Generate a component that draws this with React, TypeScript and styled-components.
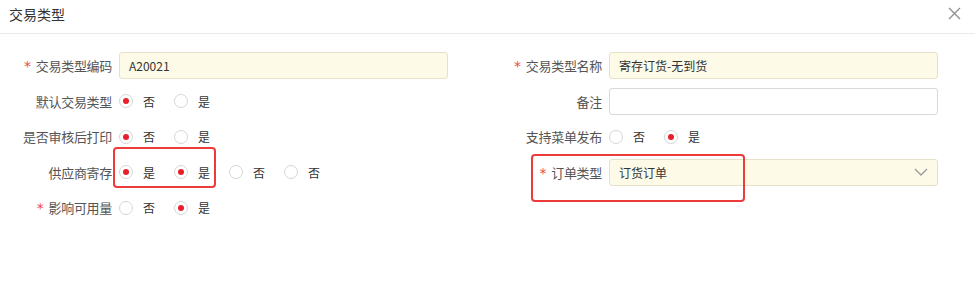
import React from "react";
import styled, { createGlobalStyle } from "styled-components";

const Global = createGlobalStyle`
  html, body { margin: 0; padding: 0; background: #fff; }
  body { font-family: "Noto Sans CJK SC", "Noto Sans", sans-serif; color: #555; }
  * { box-sizing: border-box; }
`;

const Dialog = styled.div`
  width: 975px;
  height: 306px;
  background: #fff;
`;

const Header = styled.div`
  height: 34px;
  display: flex;
  align-items: center;
  justify-content: space-between;
  padding: 0 14px 0 9px;
  border-bottom: 1px solid #e9e9e9;
`;

const Title = styled.div`
  font-size: 14px;
  color: #333;
  line-height: 1;
  margin-top: -6px;
`;

const Close = styled.button`
  border: none;
  background: none;
  padding: 0;
  width: 14px;
  height: 14px;
  display: flex;
  align-items: center;
  justify-content: center;
  margin-top: -6px;
  cursor: pointer;
`;

const Form = styled.div`
  display: grid;
  grid-template-columns: 448px 448px;
  grid-auto-rows: 35.5px;
  column-gap: 42px;
  padding-top: 13.75px;
`;

const Row = styled.div<{ $col: number; $row: number }>`
  grid-column: ${(p) => p.$col};
  grid-row: ${(p) => p.$row};
  display: flex;
  align-items: center;
  position: relative;
`;

const Label = styled.div`
  width: 113px;
  flex-shrink: 0;
  text-align: right;
  font-size: 13px;
  color: #555;
  padding-right: 1px;
  white-space: nowrap;
  letter-spacing: -0.3px;
`;

const Star = styled.span`
  color: #f04848;
  font-family: "DejaVu Sans", sans-serif;
  font-size: 14px;
  margin-right: 5px;
`;

const Input = styled.div<{ $filled?: boolean }>`
  margin-left: 6px;
  flex: 1;
  height: 27px;
  border: 1px solid ${(p) => (p.$filled ? "#e6e1c9" : "#d9d9d9")};
  background: ${(p) => (p.$filled ? "#fdfae8" : "#fff")};
  border-radius: 3px;
  display: flex;
  align-items: center;
  padding: 0 9px;
  font-size: 12px;
  color: #333;
  justify-content: space-between;
`;

const Radios = styled.div`
  margin-left: 6px;
  display: flex;
  align-items: center;
`;

const Option = styled.label`
  display: flex;
  align-items: center;
  width: 55px;
  font-size: 12px;
  color: #333;
`;

const Circle = styled.span<{ $on?: boolean }>`
  width: 14px;
  height: 14px;
  border-radius: 50%;
  border: 1px solid #d6d6d6;
  background: #fff;
  display: flex;
  align-items: center;
  justify-content: center;
  margin-right: 10px;
  &::after {
    content: "";
    width: 6px;
    height: 6px;
    border-radius: 50%;
    background: ${(p) => (p.$on ? "#e8202a" : "transparent")};
  }
`;

const Mark = styled.div<{ $l: number; $t: number; $w: number; $h: number }>`
  position: absolute;
  left: ${(p) => p.$l}px;
  top: ${(p) => p.$t}px;
  width: ${(p) => p.$w}px;
  height: ${(p) => p.$h}px;
  border: 2px solid #ec3b3b;
  border-radius: 4px;
  pointer-events: none;
`;

type Opt = { t: string; on?: boolean };

const RadioGroup = ({ opts }: { opts: Opt[] }) => (
  <Radios>
    {opts.map((o, i) => (
      <Option key={i}>
        <Circle $on={o.on} />
        {o.t}
      </Option>
    ))}
  </Radios>
);

const Chevron = () => (
  <svg width="14" height="8" viewBox="0 0 14 8" fill="none">
    <path d="M1 1l6 6 6-6" stroke="#999" strokeWidth="1.3" />
  </svg>
);

export default function App() {
  return (
    <Dialog>
      <Global />
      <Header>
        <Title>交易类型</Title>
        <Close aria-label="close">
          <svg width="13" height="13" viewBox="0 0 13 13">
            <path d="M1 1l11 11M12 1L1 12" stroke="#8f8f8f" strokeWidth="1.4" />
          </svg>
        </Close>
      </Header>
      <Form>
        <Row $col={1} $row={1}>
          <Label>
            <Star>*</Star>交易类型编码
          </Label>
          <Input $filled>A20021</Input>
        </Row>
        <Row $col={1} $row={2}>
          <Label>默认交易类型</Label>
          <RadioGroup opts={[{ t: "否", on: true }, { t: "是" }]} />
        </Row>
        <Row $col={1} $row={3}>
          <Label>是否审核后打印</Label>
          <RadioGroup opts={[{ t: "否", on: true }, { t: "是" }]} />
        </Row>
        <Row $col={1} $row={4}>
          <Label>供应商寄存</Label>
          <RadioGroup
            opts={[{ t: "是", on: true }, { t: "是", on: true }, { t: "否" }, { t: "否" }]}
          />
          <Mark $l={113} $t={-7} $w={103} $h={41} />
        </Row>
        <Row $col={1} $row={5}>
          <Label>
            <Star>*</Star>影响可用量
          </Label>
          <RadioGroup opts={[{ t: "否" }, { t: "是", on: true }]} />
        </Row>

        <Row $col={2} $row={1}>
          <Label>
            <Star>*</Star>交易类型名称
          </Label>
          <Input $filled>寄存订货-无到货</Input>
        </Row>
        <Row $col={2} $row={2}>
          <Label>备注</Label>
          <Input />
        </Row>
        <Row $col={2} $row={3}>
          <Label>支持菜单发布</Label>
          <RadioGroup opts={[{ t: "否" }, { t: "是", on: true }]} />
        </Row>
        <Row $col={2} $row={4}>
          <Label>
            <Star>*</Star>订单类型
          </Label>
          <Input $filled>
            订货订单
            <Chevron />
          </Input>
          <Mark $l={41} $t={0} $w={214} $h={48} />
        </Row>
      </Form>
    </Dialog>
  );
}
